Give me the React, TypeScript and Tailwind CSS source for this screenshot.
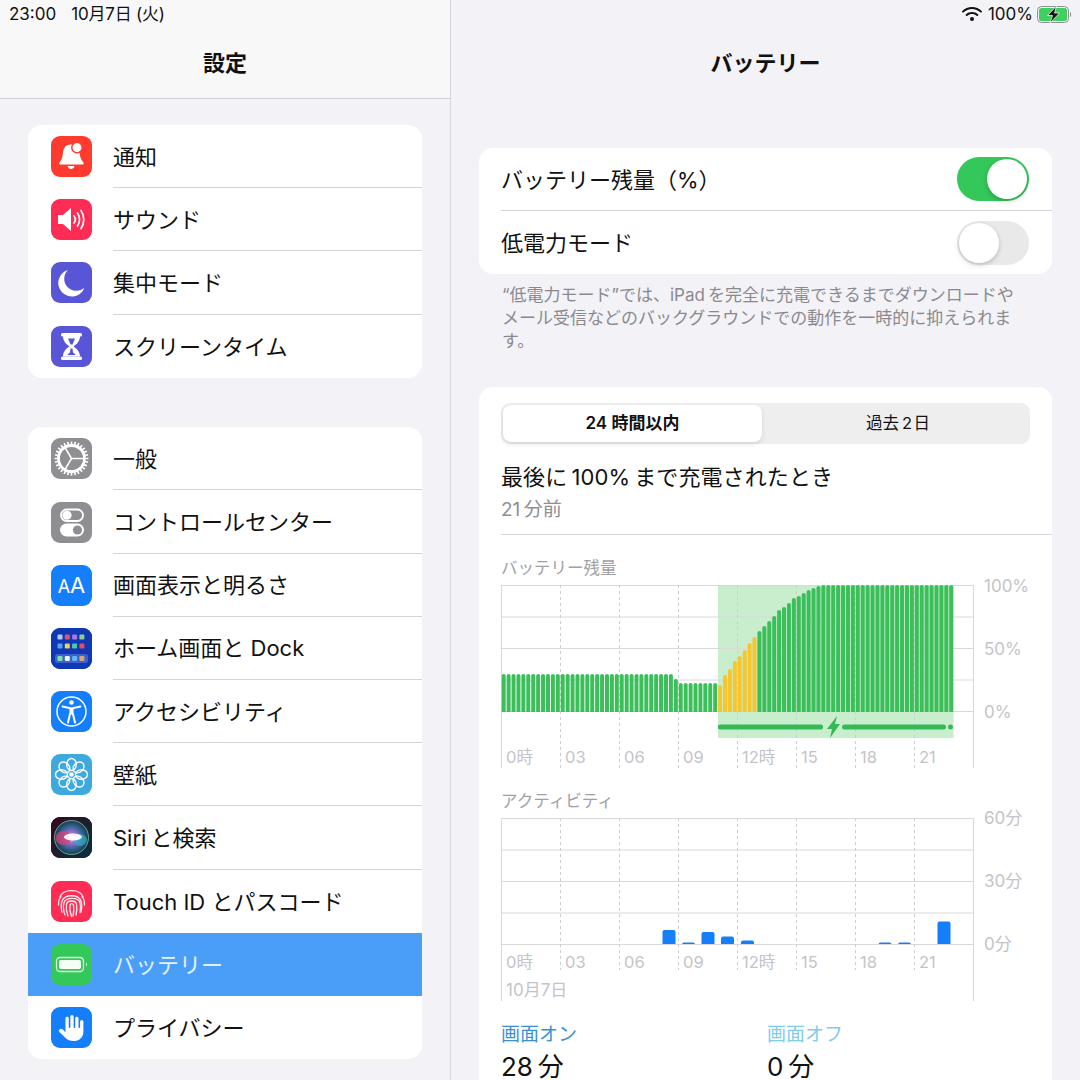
import React from "react";
import { FaWifi, FaHand } from "react-icons/fa6";

const font = "font-['Inter','Noto_Sans_CJK_JP',sans-serif]";

function Tile({ bg, children }: { bg: string; children: React.ReactNode }) {
  return (
    <div
      className={`w-[41px] h-[41px] rounded-[9px] flex items-center justify-center shrink-0 overflow-hidden ${bg}`}
    >
      {children}
    </div>
  );
}

function BellIcon() {
  return (
    <svg viewBox="0 0 41 41" className="w-[41px] h-[41px]">
      <path
        d="M20 8.500c-5 0-7.500 3.500-8 8-.5 5-1.500 8-3.500 10-.7.8-.3 2 .8 2h22.400c1.100 0 1.500-1.200.8-2-2.500-2.500-3.500-5.500-4-10-.5-4.500-3.500-8-8.500-8z"
        fill="#fff"
      />
      <path d="M16.500 30h7c-.5 2-2 3-3.500 3s-3-1-3.500-3z" fill="#fff" />
      <circle cx="26" cy="11.500" r="5.200" fill="#fff" stroke="#ff3b30" strokeWidth="1.500" />
    </svg>
  );
}

function SoundIcon() {
  return (
    <svg viewBox="0 0 41 41" className="w-[41px] h-[41px]">
      <path d="M7 16h5l8-7v23l-8-7H7z" fill="#fff" />
      <g fill="none" stroke="#fff" strokeWidth="1.700" strokeLinecap="round">
        <path d="M23 17c1.500 2 1.500 5 0 7" />
        <path d="M26.500 14c2.700 3.800 2.700 9.200 0 13" />
        <path d="M30 11.500c3.700 5.300 3.700 12.700 0 18" />
      </g>
    </svg>
  );
}

function MoonIcon() {
  return (
    <svg viewBox="0 0 41 41" className="w-[41px] h-[41px]">
      <path d="M17 8A13.500 13.500 0 1 0 33.500 25.500 12 12 0 0 1 17 8z" fill="#fff" />
    </svg>
  );
}

function HourglassIcon() {
  return (
    <svg viewBox="0 0 41 41" className="w-[41px] h-[41px]">
      <rect x="10" y="7" width="21" height="3.500" rx="1.500" fill="#fff" />
      <rect x="10" y="30.500" width="21" height="3.500" rx="1.500" fill="#fff" />
      <path d="M12 10h17c0 5-3 8-6.500 10.500 3.500 2.500 6.500 5.500 6.500 10H12c0-4.500 3-8 6.500-10C15 18 12 15 12 10z" fill="#fff" />
      <path d="M17 12.500h7l-2.500 6h-2zM19.500 22.500h2l.5 4 3 2.500h-9l3-2.500z" fill="#5856d6" />
    </svg>
  );
}

function GearIcon() {
  const teeth = Array.from({ length: 28 }, (_, i) => (i * 360) / 28);
  return (
    <svg viewBox="0 0 41 41" className="w-[41px] h-[41px]">
      <g stroke="#fff" strokeWidth="1.700">
        {teeth.map((a) => (
          <line key={a} x1="20.500" y1="3.500" x2="20.500" y2="8" transform={`rotate(${a} 20.500 20.500)`} />
        ))}
      </g>
      <circle cx="20.500" cy="20.500" r="13" fill="none" stroke="#fff" strokeWidth="2.800" />
      <g stroke="#fff" strokeWidth="1.500">
        <line x1="20.500" y1="20.500" x2="33" y2="20.500" />
        <line x1="20.500" y1="20.500" x2="14" y2="9.500" />
        <line x1="20.500" y1="20.500" x2="14" y2="31.500" />
      </g>
    </svg>
  );
}

function ControlIcon() {
  return (
    <svg viewBox="0 0 41 41" className="w-[41px] h-[41px]">
      <rect x="10" y="7.500" width="22" height="11.500" rx="5.750" fill="none" stroke="#fff" strokeWidth="1.800" />
      <circle cx="16" cy="13.250" r="4.600" fill="#fff" />
      <rect x="9" y="21.500" width="24" height="13" rx="6.500" fill="#fff" />
      <circle cx="26.500" cy="28" r="4.600" fill="#8e8e93" />
    </svg>
  );
}

function HomeIcon() {
  const top = ["#b8c8f0", "#e0507a", "#a67be0", "#8fd08f"];
  const mid = ["#4aa8f0", "#f0d060", "#50c8b0", "#e84a5f"];
  const dock = ["#7ee0a0", "#f2f2f2", "#60b8f0", "#e0a070"];
  return (
    <svg viewBox="0 0 41 41" className="w-[41px] h-[41px]">
      <rect width="41" height="41" fill="#1038b4" />
      {top.map((c, i) => (
        <rect key={c} x={6.500 + i * 7.300} y="6.500" width="5" height="5" rx="1.200" fill={c} />
      ))}
      {mid.map((c, i) => (
        <rect key={c} x={6.500 + i * 7.300} y="15.500" width="5" height="5" rx="1.200" fill={c} />
      ))}
      <rect x="4" y="26" width="33" height="9" rx="2.500" fill="#3b62d0" />
      {dock.map((c, i) => (
        <rect key={c} x={6.500 + i * 7.300} y="28" width="5" height="5" rx="1.200" fill={c} />
      ))}
    </svg>
  );
}

function AccessIcon() {
  return (
    <svg viewBox="0 0 41 41" className="w-[41px] h-[41px]">
      <circle cx="20.500" cy="20.500" r="14.500" fill="none" stroke="#fff" strokeWidth="1.500" />
      <circle cx="20.500" cy="11.500" r="2.300" fill="#fff" />
      <path d="M11.500 15.500l9 2 9-2" fill="none" stroke="#fff" strokeWidth="1.900" strokeLinecap="round" strokeLinejoin="round" />
      <path d="M20.500 17.500v6" stroke="#fff" strokeWidth="4" />
      <path d="M19 23l-2 8.500M22 23l2 8.500" fill="none" stroke="#fff" strokeWidth="2" strokeLinecap="round" />
    </svg>
  );
}

function FlowerIcon() {
  const petals = Array.from({ length: 8 }, (_, i) => i * 45);
  return (
    <svg viewBox="0 0 41 41" className="w-[41px] h-[41px]">
      <g fill="none" stroke="#fff" strokeWidth="1.400" opacity="0.95">
        {petals.map((a) => (
          <ellipse key={a} cx="20.500" cy="10.500" rx="4.800" ry="6" transform={`rotate(${a} 20.500 20.500)`} />
        ))}
      </g>
      <circle cx="20.500" cy="20.500" r="2.300" fill="#fff" />
    </svg>
  );
}

function SiriIcon() {
  return (
    <svg viewBox="0 0 41 41" className="w-[41px] h-[41px]">
      <defs>
        <linearGradient id="siriBg" x1="0" y1="0" x2="1" y2="1">
          <stop offset="0" stopColor="#36091f" />
          <stop offset="1" stopColor="#06303f" />
        </linearGradient>
        <radialGradient id="siriOrb">
          <stop offset="0" stopColor="#f4f8ff" />
          <stop offset="0.3" stopColor="#a070d0" />
          <stop offset="0.7" stopColor="#2f5f8f" />
          <stop offset="1" stopColor="#173a48" />
        </radialGradient>
      </defs>
      <rect width="41" height="41" fill="url(#siriBg)" />
      <circle cx="20.500" cy="20.500" r="17" fill="url(#siriOrb)" />
      <ellipse cx="12.500" cy="21" rx="8" ry="7" fill="#e0406f" opacity="0.7" />
      <ellipse cx="29" cy="23" rx="7" ry="6" fill="#30b4c8" opacity="0.65" />
      <ellipse cx="22" cy="20" rx="9" ry="3.500" fill="#fff" opacity="0.95" />
      <circle cx="20.500" cy="20.500" r="17" fill="none" stroke="#8fe0b8" strokeWidth="0.800" opacity="0.85" />
    </svg>
  );
}

function TouchIcon() {
  return (
    <svg viewBox="0 0 41 41" className="w-[41px] h-[41px]">
      <g fill="none" stroke="#fff" strokeWidth="1.300" strokeLinecap="round" opacity="0.92">
        <path d="M9 16c3-8.500 20-8.500 23 0" />
        <path d="M7.500 24c0-4 1-7 2.500-8M33.500 24c0-4-1-7-2.500-8" />
        <path d="M11 31c-1-4-1-8 0-11 2.500-7 16.500-7 19 0 1 3 1 7 0 11" />
        <path d="M14 34c-1.500-4-2-9-1-12.500 2-5.500 14-5.500 16 0 .8 3 .5 7 0 10" />
        <path d="M17 35c-1.500-4-2-8.500-1.500-12 1-4 9-4 10 0 .5 3.500.5 7-.5 11" />
        <path d="M20.500 35.500c-1.500-4-2-8-1.500-11.500.5-1.700 3-1.700 3.500 0 .5 3.500.5 7-.5 11" />
      </g>
    </svg>
  );
}

function BatteryIcon() {
  return (
    <svg viewBox="0 0 41 41" className="w-[41px] h-[41px]">
      <rect x="5.500" y="13.500" width="27" height="14" rx="3.500" fill="none" stroke="#d9f7df" strokeWidth="1.300" />
      <rect x="8" y="16" width="22" height="9" rx="1.800" fill="#f4fff6" />
      <path d="M35 18.500c1.200.4 1.200 3.600 0 4z" fill="#d9f7df" />
    </svg>
  );
}

const group1 = [
  { label: "通知", tile: "bg-[#ff3b30]", icon: <BellIcon /> },
  { label: "サウンド", tile: "bg-[#ff2d55]", icon: <SoundIcon /> },
  { label: "集中モード", tile: "bg-[#5856d6]", icon: <MoonIcon /> },
  { label: "スクリーンタイム", tile: "bg-[#5856d6]", icon: <HourglassIcon /> },
];

const group2 = [
  { label: "一般", tile: "bg-[#8e8e93]", icon: <GearIcon /> },
  { label: "コントロールセンター", tile: "bg-[#8e8e93]", icon: <ControlIcon /> },
  {
    label: "画面表示と明るさ",
    tile: "bg-[#147efb]",
    icon: (
      <span className="text-white font-['Inter',sans-serif] leading-none">
        <span className="text-[18px]">A</span>
        <span className="text-[22px]">A</span>
      </span>
    ),
  },
  { label: "ホーム画面と Dock", tile: "bg-[#1038b4]", icon: <HomeIcon /> },
  { label: "アクセシビリティ", tile: "bg-[#147efb]", icon: <AccessIcon /> },
  { label: "壁紙", tile: "bg-[#3fa9dc]", icon: <FlowerIcon /> },
  { label: "Siri\u2009と検索", tile: "bg-[#1a1a2a]", icon: <SiriIcon /> },
  { label: "Touch ID とパスコード", tile: "bg-[#ff2d55]", icon: <TouchIcon /> },
  { label: "バッテリー", tile: "bg-[#34c759]", icon: <BatteryIcon />, active: true },
  {
    label: "プライバシー",
    tile: "bg-[#147efb]",
    icon: <FaHand className="text-white w-[26px] h-[30px]" />,
  },
];

type RowItem = {
  label: string;
  tile: string;
  icon: React.ReactNode;
  active?: boolean;
};

function SettingsGroup({ items }: { items: RowItem[] }) {
  return (
    <div className="bg-white rounded-[14px] overflow-hidden">
      {items.map((item, i) => {
        const next = items[i + 1];
        const line = next && !item.active && !next.active;
        return (
          <div
            key={item.label}
            className={`h-[63.2px] flex items-center pl-[23px] ${item.active ? "bg-[#4a9ef8]" : ""}`}
          >
            <Tile bg={item.tile}>{item.icon}</Tile>
            <div
              className={`ml-[21px] pt-[2px] flex-1 h-full flex items-center text-[22px] ${
                item.active ? "text-[#e3f0ff]" : "text-[#111]"
              } ${line ? "border-b border-[#d4d4d8]" : ""}`}
            >
              {item.label}
            </div>
          </div>
        );
      })}
    </div>
  );
}

function Sidebar() {
  return (
    <div className="w-[451px] shrink-0 border-r border-[#d6d6da] bg-[#f2f2f7]">
      <div className="h-[99px] bg-[#f8f8f8] border-b border-[#cfcfd3] relative">
        <div className="absolute left-[9px] top-[4px] text-[17px] leading-[20px] text-[#111] flex gap-[15px]">
          <span>23:00</span>
          <span className="tracking-[-0.2px]">10月7日 (火)</span>
        </div>
        <div className="h-full pt-[46px] text-center text-[22px] leading-[34px] font-bold text-[#111]">
          設定
        </div>
      </div>
      <div className="px-[28px] pt-[26px] flex flex-col gap-[49.5px]">
        <SettingsGroup items={group1} />
        <SettingsGroup items={group2} />
      </div>
    </div>
  );
}

function Toggle({ on }: { on: boolean }) {
  return (
    <div
      className={`w-[72px] h-[44px] rounded-full p-[2px] flex ${
        on ? "bg-[#34c759] justify-end" : "bg-[#e9e9ea] justify-start"
      }`}
    >
      <div className="w-[40px] h-[40px] rounded-full bg-white shadow-[0_2px_5px_rgba(0,0,0,0.2)]" />
    </div>
  );
}

const hourLabels = ["0時", "03", "06", "09", "12時", "15", "18", "21"];
const rightEdge = 472;
const cell = 59;

// y of each bar's top, measured from the 100% line
const chargeRise = [100, 90, 84, 76, 71, 65, 58, 52, 46, 41, 36, 31, 25, 22, 18, 13, 11, 8, 5, 3, 1];

function batteryTop(i: number) {
  if (i < 35) return 89;
  if (i === 35) return 94;
  if (i < 44) return 98;
  if (i - 44 < chargeRise.length) return chargeRise[i - 44];
  return 0;
}

function ChartGrid({ height, rows }: { height: number; rows: number }) {
  const rowsArr = Array.from({ length: rows + 1 }, (_, i) => i);
  return (
    <>
      {rowsArr.map((r) => (
        <line key={r} x1="0.500" x2={rightEdge} y1={r * 31.500 + 0.500} y2={r * 31.500 + 0.500} stroke="#d9d9dc" />
      ))}
      <line x1="0.500" x2="0.500" y1="0" y2={height} stroke="#d9d9dc" />
      <line x1={rightEdge + 0.500} x2={rightEdge + 0.500} y1="0" y2={height} stroke="#d9d9dc" />
    </>
  );
}

function HourTicks({ bottom }: { bottom: number }) {
  return (
    <>
      {[1, 2, 3, 4, 5, 6, 7].map((h) => (
        <line
          key={h}
          x1={h * cell + 0.500}
          x2={h * cell + 0.500}
          y1="0"
          y2={bottom}
          stroke="#cfcfd3"
          strokeDasharray="3 3"
        />
      ))}
    </>
  );
}

function HourLabels({ y }: { y: number }) {
  return (
    <>
      {hourLabels.map((t, h) => (
        <text key={t} x={h * cell + 5} y={y} fontSize="16.500" fill="#c4c4c8">
          {t}
        </text>
      ))}
    </>
  );
}

function BatteryChart() {
  // 96 bars, one per 15 minutes; the last hour is still empty
  const bars = Array.from({ length: 92 }, (_, i) => i);
  return (
    <svg viewBox="0 0 540 183" className="w-[540px] h-[183px] block overflow-visible">
      <rect x="217" y="0" width="235.500" height="153" fill="#c8eecd" />
      <ChartGrid height={183} rows={4} />
      <HourTicks bottom={183} />
      {bars.map((i) => {
        const x = 0.700 + i * 4.918;
        const yellow = i >= 44 && i < 52;
        return (
          <path
            key={i}
            d={`M${x} 127V${batteryTop(i) + 1.800}a2 1.800 0 0 1 4 0V127z`}
            fill={yellow ? "#f7c62f" : "#3cbf5a"}
          />
        );
      })}
      <rect x="217" y="139.500" width="105" height="5" rx="2" fill="#34b956" />
      <rect x="341" y="139.500" width="104" height="5" rx="2.500" fill="#34b956" />
      <circle cx="449.500" cy="142" r="2.500" fill="#34b956" />
      <path d="M336 131l-10 13h5l-2 9 10-14h-5z" fill="#34b956" />
      <HourLabels y={178} />
      <text x="483" y="6.500" fontSize="17" fill="#c4c4c8">100%</text>
      <text x="483" y="69.500" fontSize="17" fill="#c4c4c8">50%</text>
      <text x="483" y="132.500" fontSize="17" fill="#c4c4c8">0%</text>
    </svg>
  );
}

const activity = [
  { x: 161.500, top: 112 },
  { x: 181, top: 124.500 },
  { x: 200.500, top: 114 },
  { x: 220, top: 118.500 },
  { x: 240, top: 122.500 },
  { x: 377.500, top: 124.500 },
  { x: 397, top: 124.500 },
  { x: 436.500, top: 103.500 },
];

function ActivityChart() {
  return (
    <svg viewBox="0 0 540 183" className="w-[540px] h-[183px] block overflow-visible">
      <ChartGrid height={183} rows={4} />
      <HourTicks bottom={152} />
      {activity.map((b) => (
        <path
          key={b.x}
          d={`M${b.x} 126V${b.top + 2}a2 2 0 0 1 2-2h9a2 2 0 0 1 2 2V126z`}
          fill="#147efb"
        />
      ))}
      <HourLabels y={150} />
      <text x="5" y="178" fontSize="17" fill="#c4c4c8">10月7日</text>
      <text x="483" y="6" fontSize="17" fill="#c4c4c8">60分</text>
      <text x="483" y="69" fontSize="17" fill="#c4c4c8">30分</text>
      <text x="483" y="132" fontSize="17" fill="#c4c4c8">0分</text>
    </svg>
  );
}

function BatteryPanel() {
  return (
    <div className="flex-1 bg-[#f2f2f7] min-w-0">
      <div className="h-[99px] relative">
        <div className="absolute right-[7px] top-[4px] flex items-center text-[17px] leading-[20px] text-[#111]">
          <FaWifi className="w-[20px] h-[16px] mr-[6px]" />
          <span>100%</span>
          <svg viewBox="0 0 36 17" className="w-[36px] h-[17px] ml-[4px]">
            <rect x="0.500" y="0.500" width="31" height="16" rx="4" fill="none" stroke="#8e8e93" />
            <rect x="2" y="2" width="28" height="13" rx="2.500" fill="#3fd060" />
            <path d="M33 6c1.500.4 1.500 4.600 0 5z" fill="#8e8e93" />
            <path d="M19.500 0l-9 9.500h5l-2.500 7.500 9.500-10h-5z" fill="#111" stroke="#e8f8ea" strokeWidth="0.800" />
          </svg>
        </div>
        <div className="h-full pt-[46px] text-center text-[22px] leading-[34px] font-bold text-[#111]">
          バッテリー
        </div>
      </div>

      <div className="px-[28px] pt-[49px]">
        <div className="bg-white rounded-[14px] overflow-hidden">
          <div className="h-[63px] ml-[22px] pr-[23px] flex items-center justify-between border-b border-[#d4d4d8] text-[22px] text-[#111]">
            <span className="pt-[2px]">バッテリー残量（%）</span>
            <Toggle on />
          </div>
          <div className="h-[63px] ml-[22px] pr-[23px] flex items-center justify-between text-[22px] text-[#111]">
            <span className="pt-[2px]">低電力モード</span>
            <Toggle on={false} />
          </div>
        </div>
        <p className="w-[521px] ml-[23px] pt-[10px] text-[17px] leading-[23px] text-[#8a8a8e]">
          {"“低電力モード”では、iPad\u2009を完全に充電できるまでダウンロードやメール受信などのバックグラウンドでの動作を一時的に抑えられます。"}
        </p>

        <div className="mt-[34px] bg-white rounded-t-[14px] pl-[22px] pt-[16px] pb-[40px]">
          <div className="w-[529px] h-[41px] rounded-[9px] bg-[#eeeeef] p-[2px] flex text-[17px] text-[#111]">
            <div className="w-[259px] rounded-[8px] bg-white shadow-[0_2px_4px_rgba(0,0,0,0.12)] flex items-center justify-center font-semibold">
              24 時間以内
            </div>
            <div className="flex-1 flex items-center justify-center pl-[6px] text-[16.5px]">
              {"過去\u20092\u200a日"}
            </div>
          </div>
          <div className="mt-[17px] text-[22px] leading-[32px] text-[#111] tracking-[0.1px]">
            {"最後に\u2009100%\u2009まで充電されたとき"}
          </div>
          <div className="text-[19px] leading-[34px] text-[#8e8e93] border-b border-[#d8d8dc] pb-[7px]">
            {"21\u2009分前"}
          </div>
          <div className="mt-[21px] text-[16.5px] leading-[24px] text-[#a0a0a5]">バッテリー残量</div>
          <div className="mt-[5px]">
            <BatteryChart />
          </div>
          <div className="mt-[21px] text-[16.5px] leading-[24px] text-[#a0a0a5]">アクティビティ</div>
          <div className="mt-[5px]">
            <ActivityChart />
          </div>
          <div className="mt-[19px] flex">
            <div className="w-[266px]">
              <div className="text-[19px] leading-[30px] text-[#3a8fd0]">画面オン</div>
              <div className="mt-[4px] text-[26px] leading-[26px] text-[#111]">{"28\u2009分"}</div>
            </div>
            <div>
              <div className="text-[19px] leading-[30px] text-[#7fcbe8]">画面オフ</div>
              <div className="mt-[4px] text-[26px] leading-[26px] text-[#111]">{"0\u2009分"}</div>
            </div>
          </div>
        </div>
      </div>
    </div>
  );
}

export default function App() {
  return (
    <div className={`w-[1080px] h-[1080px] overflow-hidden flex ${font}`}>
      <Sidebar />
      <BatteryPanel />
    </div>
  );
}
